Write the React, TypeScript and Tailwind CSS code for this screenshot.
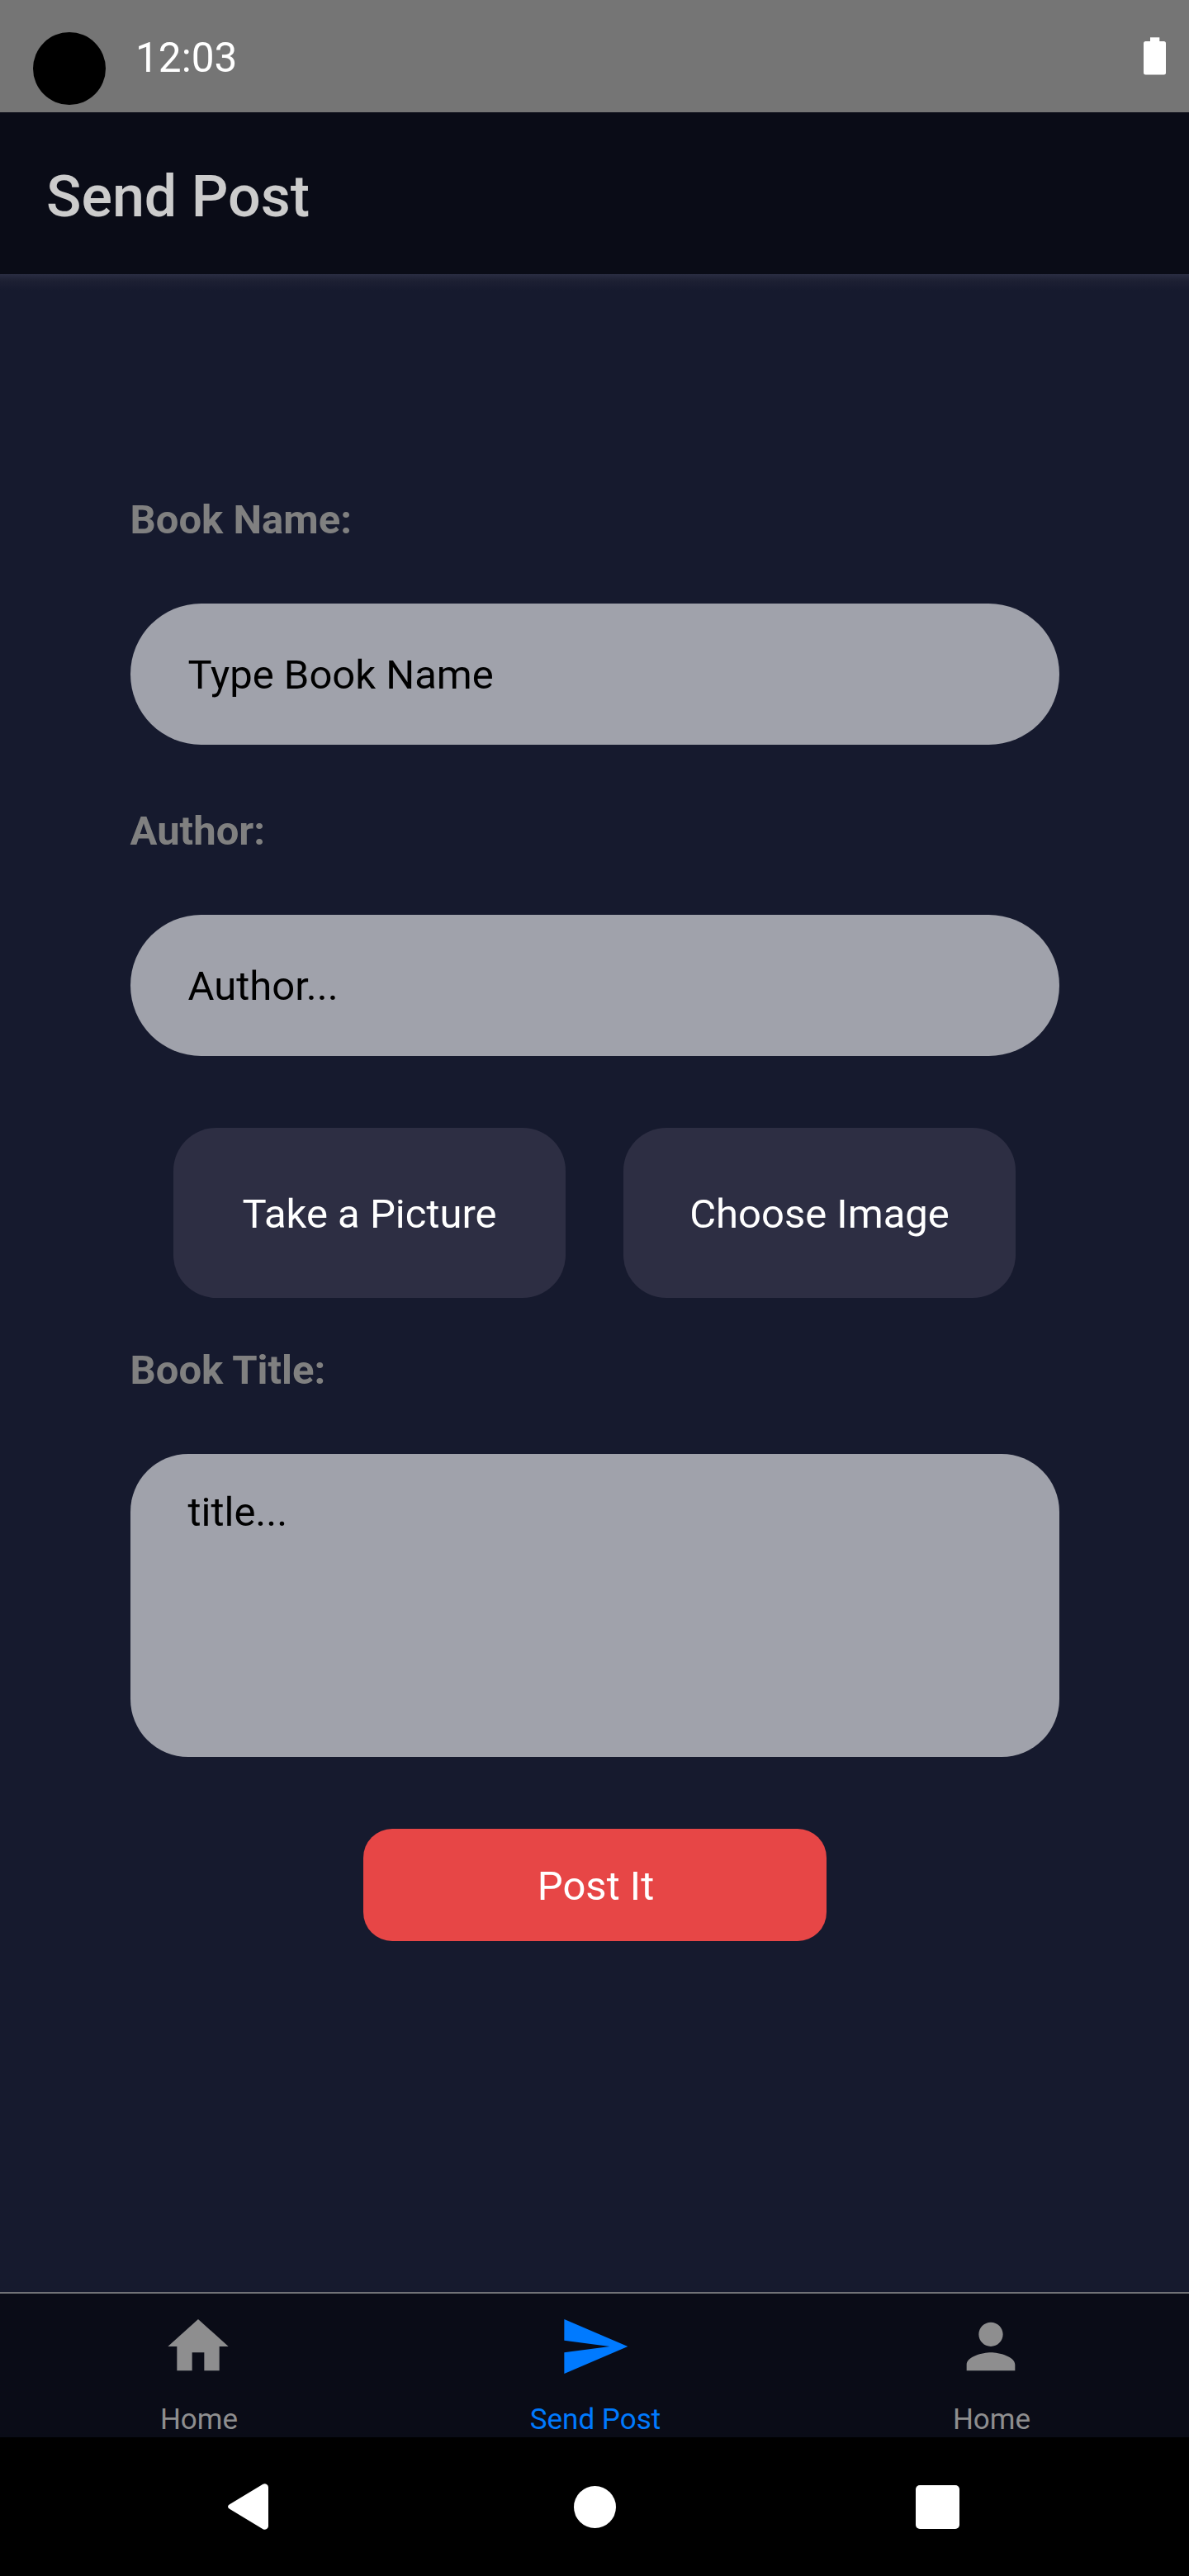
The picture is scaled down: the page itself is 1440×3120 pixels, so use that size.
import type { ReactNode } from "react";

function StatusBar() {
  return (
    <div className="flex h-[136px] items-start bg-[#757575] pr-7 pl-10">
      <div className="mt-[39px] size-[88px] rounded-full bg-black" />
      <div className="mt-[41px] ml-[36px] text-[49.5px] leading-[58px] text-white">12:03</div>
      <svg className="mt-[45px] ml-auto" width="27" height="46" viewBox="0 0 27 46" fill="#fff">
        <rect x="8" y="0.3" width="11.3" height="8" />
        <rect x="0" y="5" width="27" height="40.6" rx="2.5" />
      </svg>
    </div>
  );
}

function Label({ children }: { children: ReactNode }) {
  return <div className="text-[49px] leading-[68px] font-bold text-[#808080]">{children}</div>;
}

function Field({ placeholder, className }: { placeholder: string; className: string }) {
  return (
    <input
      placeholder={placeholder}
      className={`block h-[171px] w-full rounded-full bg-[#a0a2ab] px-[70px] pt-[2px] text-[49px] leading-[58px] text-black placeholder:text-black ${className}`}
    />
  );
}

function PictureButton({ children }: { children: ReactNode }) {
  return (
    <button className="flex h-[206px] w-[475px] items-center justify-center rounded-[52px] bg-[#2d2e43] pt-[4px] text-[49px] leading-[58px] text-white">
      {children}
    </button>
  );
}

function Tab({ label, color, path }: { label: string; color: string; path: string }) {
  return (
    <div className={`flex flex-1 flex-col items-center pt-[20px] ${color}`}>
      <svg width="88" height="88" viewBox="0 0 24 24" fill="currentColor">
        <path d={path} />
      </svg>
      <div className="mt-[24px] pl-[2px] text-[35px] leading-[42px]">{label}</div>
    </div>
  );
}

export default function App() {
  return (
    <div className="flex h-[3120px] w-[1440px] flex-col overflow-hidden bg-[#161a2e] font-[Roboto,sans-serif]">
      <StatusBar />
      <header className="flex h-[196px] items-center bg-[#0a0c17] pt-[8px] pl-[56px] text-[70px] leading-[82px] font-medium text-[#cccccc]">
        Send Post
      </header>
      <div className="h-[20px] shrink-0 bg-linear-to-b from-[#2a2d42] via-[#1d2033] via-40% to-[#161a2e]" />

      <main className="flex flex-1 flex-col px-[157.5px] pt-[244px]">
        <Label>Book Name:</Label>
        <Field placeholder="Type Book Name" className="mt-[67px]" />
        <div className="mt-[71px]">
          <Label>Author:</Label>
        </div>
        <Field placeholder="Author..." className="mt-[67px]" />
        <div className="mt-[87px] flex justify-center gap-[70px]">
          <PictureButton>Take a Picture</PictureButton>
          <PictureButton>Choose Image</PictureButton>
        </div>
        <div className="mt-[54px]">
          <Label>Book Title:</Label>
        </div>
        <textarea
          placeholder="title..."
          className="mt-[67px] block h-[367px] w-full shrink-0 resize-none rounded-[70px] bg-[#a0a2ab] px-[70px] pt-[42px] text-[49px] leading-[58px] text-black placeholder:text-black"
        />
        <button className="mt-[87px] ml-[1px] flex h-[136px] w-[561px] items-center justify-center self-center rounded-[35px] bg-[#e74646] pt-[4px] pl-[2px] text-[49px] leading-[58px] text-white">
          Post It
        </button>
      </main>

      <nav className="flex h-[176px] shrink-0 border-t-2 border-[#727377] bg-[#0a0c17]">
        <Tab label="Home" color="text-[#8e8e8f]" path="M10 20v-6h4v6h5v-8h3L12 3 2 12h3v8z" />
        <Tab label="Send Post" color="text-[#007aff]" path="M2.01 21L23 12 2.01 3 2 10l15 2-15 2z" />
        <Tab
          label="Home"
          color="text-[#8e8e8f]"
          path="M12 12c2.21 0 4-1.79 4-4s-1.79-4-4-4-4 1.79-4 4 1.79 4 4 4zm0 2c-2.67 0-8 1.34-8 4v2h16v-2c0-2.66-5.33-4-8-4z"
        />
      </nav>

      <div className="flex h-[168px] shrink-0 items-center bg-black pl-[276px]">
        <svg width="49" height="56" viewBox="0 0 49 56" fill="#fff">
          <path d="M2 25.2L42.5 0.8Q45 -0.5 47 1Q49 2.3 49 4.500V51.500Q49 53.700 47 55Q45 56.500 42.500 55.200L2 30.800Q0 29.500 0 28Q0 26.500 2 25.200Z" />
        </svg>
        <div className="ml-[369.5px] size-[51px] rounded-full bg-white" />
        <div className="ml-[363px] size-[53px] rounded-[5px] bg-white" />
      </div>
    </div>
  );
}
